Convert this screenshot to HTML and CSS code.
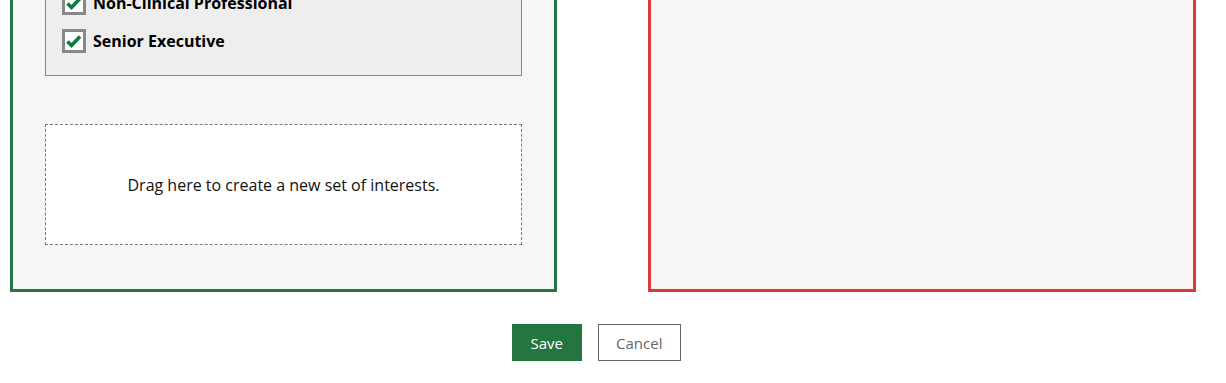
FILE: index.html
```html
<!DOCTYPE html>
<html lang="en">
<head>
    <meta charset="UTF-8">
    <meta name="viewport" content="width=device-width, initial-scale=1.0">
    <title>Interests</title>
    <link rel="stylesheet" href="styles.css">
</head>
<body>

<div class="columns">
    <div class="panel panel-keep">
        <div class="group">
            <label class="option">
                <span class="checkbox"><svg viewBox="0 0 18 18"><path d="M2.5 9.5 L6.5 13.5 L15 4.5"/></svg></span>
                Clinical Professional
            </label>
            <label class="option">
                <span class="checkbox"><svg viewBox="0 0 18 18"><path d="M2.5 9.5 L6.5 13.5 L15 4.5"/></svg></span>
                Non-Clinical Professional
            </label>
            <label class="option">
                <span class="checkbox"><svg viewBox="0 0 18 18"><path d="M2.5 9.5 L6.5 13.5 L15 4.5"/></svg></span>
                Senior Executive
            </label>
        </div>

        <div class="dropzone">Drag here to create a new set of interests.</div>
    </div>

    <div class="panel panel-remove"></div>
</div>

<div class="actions">
    <button class="btn btn-save">Save</button>
    <button class="btn btn-cancel">Cancel</button>
</div>

</body>
</html>
```

FILE: styles.css
```css
body {
    margin: 0;
    font-family: "Open Sans", Arial, sans-serif;
    color: #000;
    background: #fff;
}
.columns {
    display: flex;
    gap: 91px;
    padding-left: 10px;
    margin-top: -103px;
}
.panel {
    box-sizing: border-box;
    background-color: #f6f6f6;
    border: 3px solid;
}
.panel-keep {
    width: 547px;
    border-color: #247540;
    padding: 32px 32px 44px 32px;
}
.panel-remove {
    width: 548px;
    border-color: #dc3a3a;
}
.group {
    background-color: #eeeeee;
    border: 1px solid #888;
    padding: 20px 20px 22px 16px;
}
.option {
    display: flex;
    align-items: center;
    gap: 7px;
    height: 24px;
    margin-bottom: 14px;
    font-size: 16px;
    font-weight: bold;
}
.option:last-child {
    margin-bottom: 0;
}
.checkbox {
    box-sizing: border-box;
    width: 24px;
    height: 24px;
    border: 3px solid #888;
    background-color: #fff;
    display: flex;
}
.checkbox svg {
    width: 18px;
    height: 18px;
    fill: none;
    stroke: #0e7a3c;
    stroke-width: 3.6;
}
.dropzone {
    margin-top: 48px;
    height: 121px;
    box-sizing: border-box;
    border: 1px dashed #777;
    background-color: #fff;
    display: flex;
    align-items: center;
    justify-content: center;
    font-size: 16px;
    color: #111;
}
.actions {
    display: flex;
    justify-content: center;
    gap: 16px;
    width: 1186px;
    box-sizing: border-box;
    margin-left: 10px;
    padding-right: 13px;
    margin-top: 32px;
}
.btn {
    box-sizing: border-box;
    height: 37px;
    padding: 0 17.5px;
    font-family: "Open Sans", Arial, sans-serif;
    font-size: 15px;
    border-radius: 0;
    cursor: pointer;
}
.btn-save {
    background-color: #247540;
    color: #fff;
    border: 1px solid #247540;
}
.btn-cancel {
    background-color: #fff;
    color: #666;
    border: 1px solid #666;
}
```
